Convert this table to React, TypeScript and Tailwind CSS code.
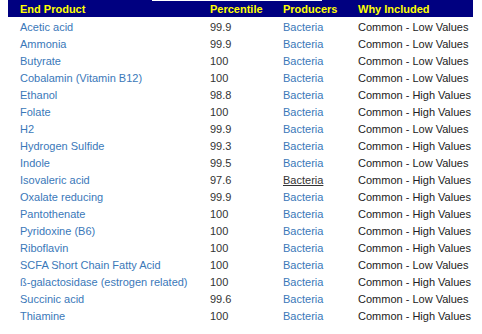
const rows: [string, string, string][] = [
  ["Acetic acid", "99.9", "Common - Low Values"],
  ["Ammonia", "99.9", "Common - Low Values"],
  ["Butyrate", "100", "Common - Low Values"],
  ["Cobalamin (Vitamin B12)", "100", "Common - Low Values"],
  ["Ethanol", "98.8", "Common - High Values"],
  ["Folate", "100", "Common - High Values"],
  ["H2", "99.9", "Common - Low Values"],
  ["Hydrogen Sulfide", "99.3", "Common - High Values"],
  ["Indole", "99.5", "Common - Low Values"],
  ["Isovaleric acid", "97.6", "Common - High Values"],
  ["Oxalate reducing", "99.9", "Common - High Values"],
  ["Pantothenate", "100", "Common - High Values"],
  ["Pyridoxine (B6)", "100", "Common - High Values"],
  ["Riboflavin", "100", "Common - High Values"],
  ["SCFA Short Chain Fatty Acid", "100", "Common - Low Values"],
  ["ß-galactosidase (estrogen related)", "100", "Common - High Values"],
  ["Succinic acid", "99.6", "Common - Low Values"],
  ["Thiamine", "100", "Common - High Values"],
]

export default function App() {
  return (
    <div className="relative w-[482px] h-[334px] bg-white font-['Liberation_Sans',Arial,sans-serif] text-[11px]">
      <table className="ml-2 w-[465px] border-collapse table-fixed">
        <colgroup>
          <col className="w-[190px]" />
          <col className="w-[73px]" />
          <col className="w-[75px]" />
          <col />
        </colgroup>
        <thead>
          <tr className="h-[17px] bg-[#000080] text-[#ffff00] font-bold text-left">
            <th className="pl-3 pt-[1px] pb-0 leading-[16px]">End Product</th>
            <th className="pl-3 pt-[1px] pb-0 leading-[16px]">Percentile</th>
            <th className="pl-3 pt-[1px] pb-0 leading-[16px]">Producers</th>
            <th className="pl-3 pt-[1px] pb-0 leading-[16px]">Why Included</th>
          </tr>
        </thead>
        <tbody>
          {rows.map(([name, pct, why]) => (
            <tr key={name} className="h-[17px]">
              <td className="pl-3 pt-[4px] pb-0 leading-[13px] whitespace-nowrap text-[#3a78b9]">{name}</td>
              <td className="pl-3 pt-[4px] pb-0 leading-[13px] text-[#333]">{pct}</td>
              <td className="pl-3 pt-[4px] pb-0 leading-[13px]">
                {name === "Isovaleric acid" ? (
                  <span className="underline text-[#333]">Bacteria</span>
                ) : (
                  <span className="text-[#3a78b9]">Bacteria</span>
                )}
              </td>
              <td className="pl-3 pt-[4px] pb-0 leading-[13px] whitespace-nowrap text-[#222]">{why}</td>
            </tr>
          ))}
        </tbody>
      </table>
      <div className="absolute top-0 left-[152px] w-[170px] h-px bg-white" />
    </div>
  )
}
